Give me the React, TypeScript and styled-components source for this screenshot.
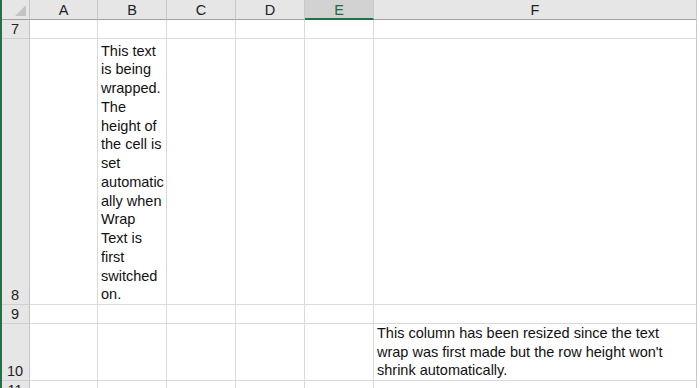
import styled, { createGlobalStyle } from 'styled-components';

const GlobalStyle = createGlobalStyle`
    html, body {
        margin: 0;
        padding: 0;
        background: #ffffff;
        overflow: hidden;
    }
    body {
        width: 700px;
        height: 388px;
        font-family: "Liberation Sans", Arial, sans-serif;
    }
`;

const columns = ['A', 'B', 'C', 'D', 'E', 'F'];
const selectedColumn = 'E';

const wrappedB = [
    'This text', 'is being', 'wrapped.', 'The', 'height of', 'the cell is', 'set',
    'automatic', 'ally when', 'Wrap', 'Text is', 'first', 'switched', 'on.',
];

const wrappedF = [
    'This column has been resized since the text',
    "wrap was first made but the row height won't",
    'shrink automatically.',
];

const rows: { num: number; cells: Record<string, string[]> }[] = [
    { num: 7, cells: {} },
    { num: 8, cells: { B: wrappedB } },
    { num: 9, cells: {} },
    { num: 10, cells: { F: wrappedF } },
    { num: 11, cells: {} },
];

export default function App() {
    return (
        <>
            <GlobalStyle />
            <Window>
                <Sheet>
                    <Corner>
                        <svg width="11" height="11" viewBox="0 0 11 11">
                            <polygon points="11,0 11,11 0,11" fill="#c4c4c4" />
                        </svg>
                    </Corner>
                    {columns.map((col) => (
                        <ColHeader key={col} selected={col === selectedColumn}>{col}</ColHeader>
                    ))}
                    {rows.map((row) => (
                        <Row key={row.num}>
                            <RowHeader>{row.num}</RowHeader>
                            {columns.map((col) => (
                                <Cell key={col}>
                                    {row.cells[col]?.map((line, i) => <Line key={i}>{line}</Line>)}
                                </Cell>
                            ))}
                        </Row>
                    ))}
                </Sheet>
            </Window>
        </>
    );
}

const Window = styled.div`
    width: 700px;
    height: 388px;
    overflow: hidden;
    background: #ffffff;
`;

const Sheet = styled.div`
    width: 695px;
    border-left: 2px solid #217346;
    display: grid;
    grid-template-columns: 28px 68px 69px 69px 69px 69px 323px;
    grid-template-rows: 20px 19px 266px 19px 57px 19px;
`;

const Row = styled.div`
    display: contents;
`;

const Corner = styled.div`
    box-sizing: border-box;
    background: #e6e6e6;
    border-right: 1px solid #c6c6c6;
    border-bottom: 1px solid #9f9f9f;
    display: flex;
    align-items: flex-end;
    justify-content: flex-end;
    padding: 0 3px 3px 0;
`;

const ColHeader = styled.div<{ selected: boolean }>`
    box-sizing: border-box;
    background: ${(props) => props.selected ? '#d2d2d2' : '#e6e6e6'};
    color: ${(props) => props.selected ? '#1e6b43' : '#222222'};
    border-right: 1px solid #c9c9c9;
    border-bottom: ${(props) => props.selected ? '2px solid #217346' : '1px solid #9f9f9f'};
    font-size: 14.5px;
    display: flex;
    align-items: center;
    justify-content: center;
    padding-top: 1px;

    &:last-child {
        border-right: 1px solid #b8b8b8;
    }
`;

const RowHeader = styled.div`
    box-sizing: border-box;
    background: #e6e6e6;
    color: #222222;
    border-right: 1px solid #c2c2c2;
    border-bottom: 1px solid #cfcfcf;
    font-size: 14.5px;
    line-height: 17px;
    display: flex;
    align-items: flex-end;
    justify-content: center;
    padding-right: 1px;
`;

const Cell = styled.div`
    box-sizing: border-box;
    border-right: 1px solid #dadada;
    border-bottom: 1px solid #dadada;
    color: #111111;
    font-size: 14.5px;
    line-height: 18.75px;
    display: flex;
    flex-direction: column;
    justify-content: flex-end;
    padding: 0 2px 0 3px;
    overflow: hidden;
    white-space: nowrap;

    &:last-child {
        border-right: 1px solid #c8c8c8;
    }
`;

const Line = styled.span`
    display: block;
`;
